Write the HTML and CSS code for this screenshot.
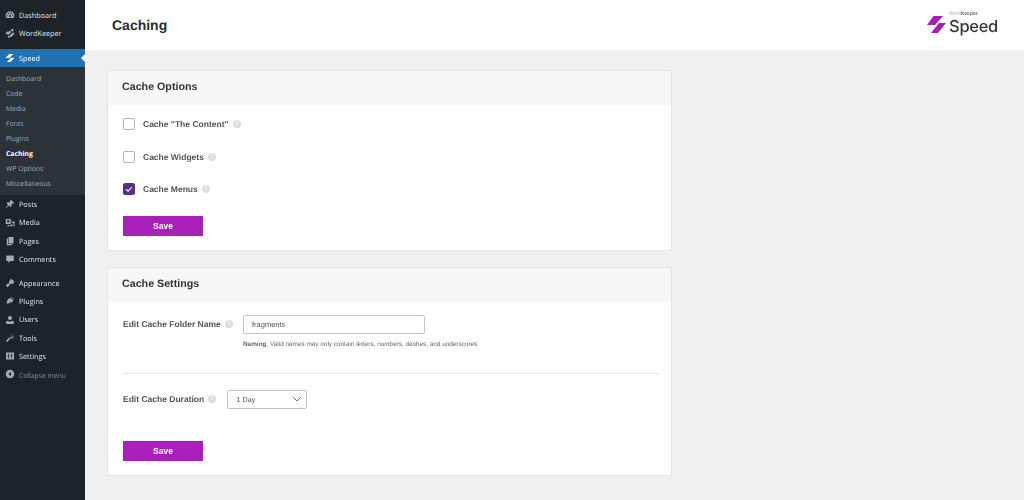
FILE: index.html
```html
<!DOCTYPE html>
<html lang="en">
<head>
<meta charset="utf-8">
<title>Caching</title>
<link rel="stylesheet" href="styles.css">
</head>
<body>
<div class="app">
  <nav class="side">
    <ul class="menu first">
      <li class="item"><svg class="ic" viewBox="0 0 20 20"><path fill-rule="evenodd" d="M10 2.500a8.500 8.500 0 0 0-7 13.500h14a8.500 8.500 0 0 0-7-13.500zM9 4.500h2v2.500H9zM5 6.500L6.500 5.300 8 7.300 6.500 8.500zM15 6.500L13.500 5.300 12 7.300 13.500 8.500zM3.500 10.500H6v2H3.500zM14 10.500h2.500v2H14zM8.500 9.500h3L11.500 14h-3z"/></svg><span>Dashboard</span></li>
      <li class="item"><svg class="ic big" viewBox="0 0 20 20"><path d="M15 1l3 3-3.500 3.500-3-3zM9.500 5l3 3-6 6-3-3zM16 8.500l3 3-7 7-3-3zM8 15l2.500 2.500L8 20l-2.500-2.500zM5 6.500l2 2L2.500 13 1 11z"/></svg><span>WordKeeper</span></li>
    </ul>
    <div class="active-group">
      <div class="item current"><svg class="ic" viewBox="0 0 20 20"><path d="M8.500 2H17l-8.500 8H1zM12 9.500h7L11 18H4z"/></svg><span>Speed</span></div>
      <ul class="sub">
        <li>Dashboard</li>
        <li>Code</li>
        <li>Media</li>
        <li>Fonts</li>
        <li>Plugins</li>
        <li class="on">Caching</li>
        <li>WP Options</li>
        <li>Miscellaneous</li>
      </ul>
    </div>
    <ul class="menu">
      <li class="item"><svg class="ic" viewBox="0 0 20 20"><path d="M12 1.500l6.500 6.500-2 1-1-.5-3 3 .5 3.500-1.500 1.500-3.500-3.500L2 18l-.5-.5 4.500-6-3-3.500L4.500 6.500 8 7l3-3-.5-1z"/></svg><span>Posts</span></li>
      <li class="item"><svg class="ic" viewBox="0 0 20 20"><path fill-rule="evenodd" d="M1.500 2h10v10h-10zM6.500 4.200a2.500 2.500 0 1 0 0 5 2.500 2.500 0 0 0 0-5zM13.500 7H19v10h-2v-7h-3.500zM13 12.500a2.300 2.300 0 1 1 0 4.600 2.300 2.300 0 0 1 0-4.600zM5 14h4v3H5z"/></svg><span>Media</span></li>
      <li class="item"><svg class="ic" viewBox="0 0 20 20"><path d="M7 2h10v13H7zM3.500 5H6v11h8v2.500H3.500z"/></svg><span>Pages</span></li>
      <li class="item"><svg class="ic" viewBox="0 0 20 20"><path d="M2.500 3h15v11h-6.500l-4 4v-4H2.500z"/></svg><span>Comments</span></li>
    </ul>
    <ul class="menu group">
      <li class="item"><svg class="ic" viewBox="0 0 20 20"><path d="M12 1.500l7 5.500-4 5.500-2.500-1.500-1.500 2-3.500-3.500 1.500-2-1-1zM6.500 10l3.500 3.500-5 5L1.500 15z"/></svg><span>Appearance</span></li>
      <li class="item"><svg class="ic" viewBox="0 0 20 20"><path d="M13 2l1.500 1-2.500 3 2 1.500 2.500-3L18 5.500l-3 4v2.500l-3 1.500-2-1-3 2.500H3c1-5 1-7 4-9.500l2-1 1 1z"/></svg><span>Plugins</span></li>
      <li class="item"><svg class="ic" viewBox="0 0 20 20"><circle cx="10" cy="6" r="4"/><path d="M2.500 12h4.500l3 2 3-2h4.500v6h-15z"/></svg><span>Users</span></li>
      <li class="item"><svg class="ic" viewBox="0 0 20 20"><path d="M14 1.500a5 5 0 0 1 4.500 5.500l-3 1.500-3-2 1-4-2.500 1-1 4.500L2 15.500 4.500 18l7-7.500 3.500.5 4-4-.5-2.500z M10 5l4-3.500-1 4 3 2-3 1.500h-3z"/></svg><span>Tools</span></li>
      <li class="item"><svg class="ic" viewBox="0 0 20 20"><path fill-rule="evenodd" d="M2 3h16v14H2zM6 5.500v3.500H4.500v1.500H6V15h1.500v-4.500H9V9H7.500V5.500zM12.500 5.500v2H11V9h1.500v6H14V9h1.500V7.500H14v-2z"/></svg><span>Settings</span></li>
      <li class="item collapse"><svg class="ic" viewBox="0 0 20 20"><path fill-rule="evenodd" d="M10 1.500a8.500 8.500 0 1 1 0 17 8.500 8.500 0 0 1 0-17zM12 6L6.500 10l5.500 4z"/></svg><span>Collapse menu</span></li>
    </ul>
  </nav>
  <div class="main">
    <header class="top">
      <h1>Caching</h1>
      <div class="logo">
        <svg class="mark" viewBox="0 0 19 17"><path d="M6.500 0H16L8 9H0zM12 7h7l-8 10H4z"/></svg>
        <div class="brand"><small><span>Word</span>Keeper</small><b>Speed</b></div>
      </div>
    </header>
    <div class="content">
      <section class="card">
        <h2>Cache Options</h2>
        <div class="options">
          <label class="check"><i class="box"></i><b>Cache "The Content"</b><i class="help">?</i></label>
          <label class="check"><i class="box"></i><b>Cache Widgets</b><i class="help">?</i></label>
          <label class="check"><i class="box checked"><svg viewBox="0 0 12 12"><path d="M2.500 6.300l2.400 2.300 4.600-5"/></svg></i><b>Cache Menus</b><i class="help">?</i></label>
          <button class="save" type="button">Save</button>
        </div>
      </section>
      <section class="card">
        <h2>Cache Settings</h2>
        <div class="settings">
          <div class="row folder">
            <div class="name"><b>Edit Cache Folder Name</b><i class="help">?</i></div>
            <div class="field">
              <div class="input">fragments</div>
              <p class="note"><b>Naming</b>: Valid names may only contain letters, numbers, dashes, and underscores</p>
            </div>
          </div>
          <div class="row duration">
            <div class="name"><b>Edit Cache Duration</b><i class="help">?</i></div>
            <div class="select"><span>1 Day</span><svg viewBox="0 0 10 6"><path d="M1 1l4 4 4-4"/></svg></div>
          </div>
          <button class="save" type="button">Save</button>
        </div>
      </section>
    </div>
  </div>
</div>
</body>
</html>
```
FILE: styles.css
```css
* { box-sizing: border-box; }
html, body { margin: 0; height: 100%; }
body { background: #f0f0f0; font-family: "Liberation Sans", Arial, sans-serif; overflow: hidden; text-rendering: geometricPrecision; }
ul { list-style: none; margin: 0; padding: 0; }

.app { display: flex; height: 500px; filter: blur(0.3px); }

.side { flex: 0 0 85px; width: 85px; background: #1d2327; color: #f0f0f1; font-family: "Open Sans", sans-serif; font-size: 7.25px; padding-top: 6px; }
.item { display: flex; align-items: center; height: 18.25px; padding-left: 4.500px; color: #e4e6e7; position: relative; }
.item span { margin-left: 4.500px; padding-top: 1.500px; }
.ic { width: 10px; height: 10px; fill: #a7aaad; flex: none; }
.ic.big { width: 10px; height: 12px; }
.active-group { margin-top: 6.400px; }
.current { background: #2271b1; color: #fff; }
.current .ic { fill: #fff; }
.current::after { content: ""; position: absolute; right: 0; top: 5px; border: 4px solid transparent; border-right-color: #f0f0f0; border-left-width: 0; }
.sub { background: #2c3338; padding: 4px 0 4px; font-size: 6.800px; }
.sub li { height: 15px; line-height: 15px; padding-left: 6px; color: #a4a9ad; }
.sub .on { color: #fff; font-weight: 700; }
.group { margin-top: 5.800px; }
.collapse { color: #8c8f94; font-size: 6.800px; }

.main { flex: 1; min-width: 0; }
.top { height: 49.500px; background: #fff; display: flex; align-items: center; justify-content: space-between; padding: 0 26px 0 27px; }
h1 { margin: 0; font-size: 14px; font-weight: 700; color: #2a2e33; }
.logo { display: flex; align-items: center; gap: 3px; }
.mark { width: 19px; height: 17px; fill: #a81fb5; margin-bottom: 1px; }
.brand { display: flex; flex-direction: column; gap: 2px; margin-bottom: 4px; color: #33373b; }
.brand small { font-size: 4.800px; font-weight: 600; line-height: 5px; height: 5px; font-family: Inter, sans-serif; color: #666; }
.brand small span { font-weight: 400; color: #aaa; }
.brand b { font-family: Inter, sans-serif; font-weight: 500; font-size: 16.500px; line-height: 15px; letter-spacing: -0.3px; }

.content { padding: 20.500px 0 0 22px; width: 587px; display: flex; flex-direction: column; gap: 16px; }
.card { background: #fff; border: 1px solid #e4e4e4; }
h2 { margin: 0; height: 34px; line-height: 32.500px; background: #f7f7f7; padding-left: 14px; font-size: 10.700px; font-weight: 700; color: #2f3439; }
.options { padding: 13px 16px 14.500px 15px; display: flex; flex-direction: column; align-items: flex-start; }
.check { display: flex; align-items: center; height: 12px; margin-bottom: 20.500px; font-size: 8.500px; color: #50555b; }
.check b { margin-left: 8px; }
.box { width: 12px; height: 12px; border: 1px solid #b5b5b5; border-radius: 2px; background: #fff; display: block; flex: none; }
.box.checked { background: #56318b; border-color: #56318b; }
.box svg { display: block; width: 10px; height: 10px; fill: none; stroke: #fff; stroke-width: 1.300; }
.help { display: flex; align-items: center; justify-content: center; width: 8px; height: 8px; border-radius: 50%; background: #dedede; margin-left: 4px; font: 700 5.500px "Liberation Sans", Arial, sans-serif; color: #f6f6f6; }
.save { display: block; width: 80px; height: 20px; border: 0; padding: 0; background: #a91fb9; color: #fff; font: 700 8.500px "Liberation Sans", Arial, sans-serif; }

.settings { padding: 13px 12px 14.500px 15px; }
.row { display: flex; font-size: 8.500px; color: #50555b; }
.folder { border-bottom: 1px solid #e7e7e7; height: 59px; }
.name { display: flex; align-items: center; height: 18.500px; }
.folder .name { width: 120px; }
.input { width: 182px; height: 19px; border: 1px solid #c4c4c4; border-radius: 2px; padding-left: 8px; line-height: 18px; font-size: 7.500px; color: #555; }
.note { margin: 6.500px 0 0; font-size: 6.400px; color: #666; }
.duration { margin-top: 16px; height: 50.500px; }
.duration .name { width: 104px; }
.select { width: 80px; height: 18.500px; border: 1px solid #c4c4c4; border-radius: 2px; display: flex; align-items: center; justify-content: space-between; padding: 0 4.500px 0 8.500px; font-size: 7.200px; color: #555; }
.select svg { width: 10px; height: 6px; fill: none; stroke: #b84fc6; stroke-width: 1; }
```
